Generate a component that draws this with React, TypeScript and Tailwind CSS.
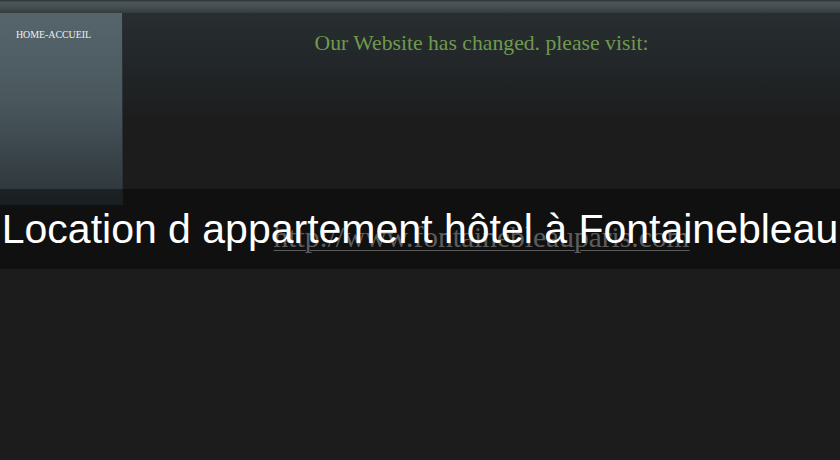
import React from "react";

const serif = "font-['Liberation_Serif','Times_New_Roman',serif]";

const App: React.FC = () => {
  return (
    <div className="relative w-[840px] h-[460px] overflow-hidden bg-[#1c1c1c]">
      {/* top strip */}
      <div className="h-[13px] w-full bg-[linear-gradient(to_bottom,#2e3437_0%,#4d575a_20%,#454e51_55%,#343b3e_100%)]" />

      <div className="flex">
        <aside className="w-[123px] h-[192px] border-r border-[#2a3236] bg-[linear-gradient(to_bottom,#56656c_0%,#4a585e_45%,#2b3338_100%)]">
          <a
            href="#"
            className={`block pl-[16px] pt-[17px] text-[10px] leading-none tracking-[-0.1px] text-[#eef0f1] ${serif}`}
          >
            HOME-ACCUEIL
          </a>
        </aside>

        <main className="flex-1 flex flex-col items-center pt-[20px] bg-[linear-gradient(to_bottom,#282e31_0px,#212527_60px,#1c1c1c_110px)] h-[447px]">
          <p className={`text-[21.7px] leading-none text-[#6f9a4e] ${serif}`}>
            Our Website has changed. please visit:
          </p>
          <a
            href="#"
            className={`mt-[168px] text-[29.5px] leading-none text-[#9a9a9a] underline decoration-1 underline-offset-[3px] ${serif}`}
          >
            http://www.fontainebleauparis.com
          </a>
        </main>
      </div>

      {/* title band over the page */}
      <div className="absolute left-0 right-0 top-[189px] h-[80px] flex items-center justify-center bg-black/40">
        <h1 className="text-[41px] leading-none text-white whitespace-nowrap font-['Liberation_Sans',Arial,sans-serif]">
          Location d appartement hôtel à Fontainebleau
        </h1>
      </div>
    </div>
  );
};

export default App;
